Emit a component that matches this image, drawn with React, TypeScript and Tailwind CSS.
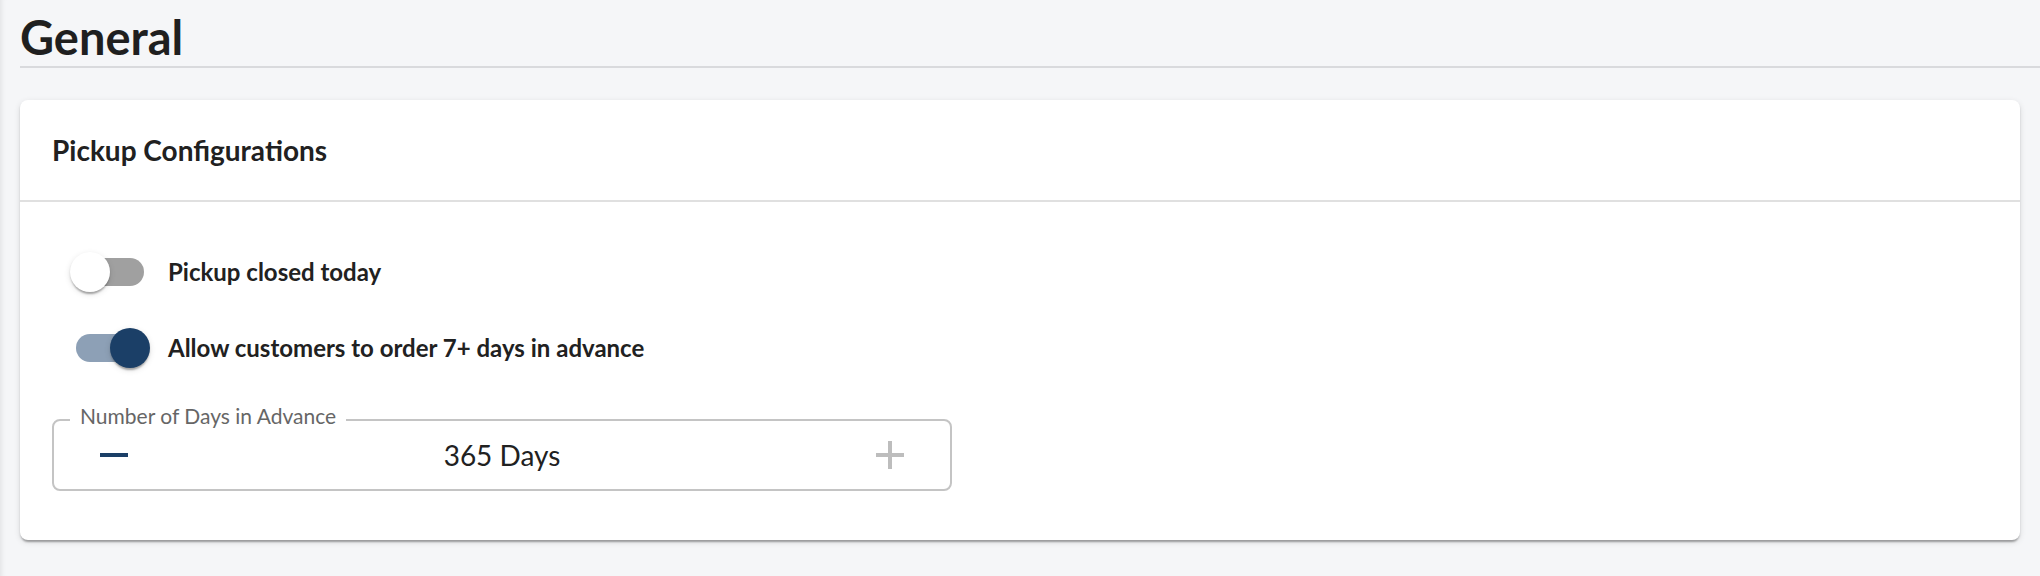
import { useState } from "react";

function Toggle({ on, onChange }: { on: boolean; onChange: () => void }) {
  return (
    <button
      type="button"
      onClick={onChange}
      className="relative w-[116px] h-[76px] p-[24px] shrink-0 cursor-pointer"
      aria-pressed={on}>
      <span className={`block w-full h-full rounded-full ${on ? "bg-[#8da0b6]" : "bg-[#a0a0a0]"}`} />
      <span
        className={`absolute top-[18px] w-[40px] h-[40px] rounded-full shadow-[0_4px_2px_-2px_rgba(0,0,0,0.2),0_2px_2px_0_rgba(0,0,0,0.14),0_2px_6px_0_rgba(0,0,0,0.12)] ${
          on ? "left-[58px] bg-[#1b3f67]" : "left-[18px] bg-white"
        }`}
      />
    </button>
  );
}

export default function App() {
  const [closed, setClosed] = useState(false);
  const [advance, setAdvance] = useState(true);
  const [days, setDays] = useState(365);

  return (
    <div className="min-h-screen bg-[#f5f6f8] font-['Lato',sans-serif] text-[#212121] shadow-[inset_6px_0_6px_-6px_rgba(0,0,0,0.12)]">
      <div className="pl-5 pt-[9px]">
        <h1 className="text-[47px] leading-[57px] font-bold text-[#1f1f1f] border-b-2 border-[#d9dadd]">General</h1>
      </div>

      <div className="mx-5 mt-[32px] rounded-lg bg-white shadow-[0_4px_2px_-2px_rgba(0,0,0,0.2),0_2px_2px_0_rgba(0,0,0,0.14),0_2px_6px_0_rgba(0,0,0,0.12)]">
        <div className="h-[102px] px-8 flex items-center border-b-2 border-[#e0e0e0]">
          <h2 className="text-[28px] font-bold">Pickup Configurations</h2>
        </div>

        <div className="pt-8 px-8 pb-[49px]">
          <div className="flex items-center">
            <Toggle on={closed} onChange={() => setClosed(!closed)} />
            <span className="text-[24px] font-bold">Pickup closed today</span>
          </div>
          <div className="flex items-center">
            <Toggle on={advance} onChange={() => setAdvance(!advance)} />
            <span className="text-[24px] font-bold">Allow customers to order 7+ days in advance</span>
          </div>

          <div className="relative mt-[33px] w-[900px] h-[72px] rounded-lg border-2 border-[#c4c4c4]">
            <span className="absolute left-[16px] -top-[16px] bg-white px-[10px] text-[21px] leading-[21px] text-[#666666]">
              Number of Days in Advance
            </span>
            <div className="flex items-center justify-between h-full px-[12px]">
              <button
                type="button"
                onClick={() => setDays(Math.max(7, days - 1))}
                className="w-[96px] h-[48px] flex items-center justify-center">
                <span className="block w-[28px] h-[4px] bg-[#1b3f67]" />
              </button>
              <span className="text-[28px]">{days} Days</span>
              <button
                type="button"
                onClick={() => setDays(Math.min(365, days + 1))}
                className="w-[96px] h-[48px] flex items-center justify-center">
                <svg width="28" height="28" viewBox="0 0 28 28">
                  <rect x="0" y="12" width="28" height="4" fill="#bdbdbd" />
                  <rect x="12" y="0" width="4" height="28" fill="#bdbdbd" />
                </svg>
              </button>
            </div>
          </div>
        </div>
      </div>
    </div>
  );
}
